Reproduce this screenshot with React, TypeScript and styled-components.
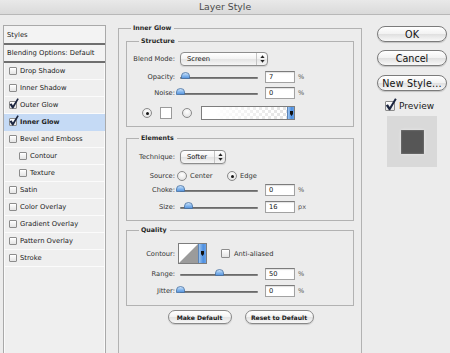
import React from "react";
import styled, { createGlobalStyle } from "styled-components";

const Global = createGlobalStyle`
  html, body { margin: 0; padding: 0; width: 450px; height: 353px; overflow: hidden; background: #ececec; }
  body { font-family: "DejaVu Sans", "Noto Sans", sans-serif; color: #2a2a2a; }
  *, *::before, *::after { box-sizing: border-box; }
`;

const Window = styled.div`
  width: 450px;
  height: 353px;
  display: flex;
  flex-direction: column;
  background: #ececec;
  overflow: hidden;
`;

const TitleBar = styled.div`
  height: 15px;
  flex: none;
  background: linear-gradient(#e9e9e9, #dadada);
  border-bottom: 1px solid #b8b8b8;
  display: flex;
  align-items: center;
  justify-content: center;
  font-size: 9.3px;
  line-height: 1;
  color: #4b4b4b;
`;

const Body = styled.div`
  display: flex;
  align-items: flex-start;
  padding: 8px 0 0 3px;
`;

/* ---------- left list ---------- */

const StyleList = styled.div`
  width: 103px;
  height: 340px;
  margin-top: 2px;
  flex: none;
  border: 1px solid #a9a9a9;
  border-bottom: none;
  background: #efefef;
  box-shadow: inset 1px 0 0 #fafafa, inset -1px 0 0 #fafafa;
  font-size: 6.8px;
  color: #222;
`;

const ListHead = styled.div<{ h: number }>`
  height: ${(p) => p.h}px;
  display: flex;
  align-items: center;
  padding-left: 3px;
  background: #f3f3f3;
  border-bottom: 2px solid #6f6f6f;
`;

const ListRow = styled.div<{ indent?: boolean; selected?: boolean }>`
  height: 17px;
  display: flex;
  align-items: center;
  gap: 3px;
  padding-left: ${(p) => (p.indent ? 15 : 5)}px;
  background: ${(p) => (p.selected ? "#c5daf5" : "transparent")};
  border-bottom: 1px solid ${(p) => (p.selected ? "#c5daf5" : "#fbfbfb")};
  font-weight: ${(p) => (p.selected ? "bold" : "normal")};
  font-size: ${(p) => (p.selected ? 6.5 : 6.8)}px;
`;

const BoxWrap = styled.span<{ s: number }>`
  position: relative;
  flex: none;
  width: ${(p) => p.s}px;
  height: ${(p) => p.s}px;
  border: 1px solid #8c8c8c;
  border-radius: 1px;
  background: linear-gradient(#ffffff, #e4e4e4);
  box-shadow: inset 0 1px 0 #fff;
`;

const CheckMark = styled.svg`
  position: absolute;
  left: -1px;
  bottom: -1px;
`;

const CheckBox = ({ checked, s = 8 }: { checked?: boolean; s?: number }) => (
  <BoxWrap s={s}>
    {checked && (
      <CheckMark width={s + 2} height={s + 3} viewBox="0 0 10 11">
        <path
          d="M0.6 6.4 L2.4 5.2 L3.9 7.6 L8.4 0.2 L9.8 1.1 L4.3 10.4 L3.3 10.4 Z"
          fill="#1c2640"
        />
      </CheckMark>
    )}
  </BoxWrap>
);

/* ---------- main panel ---------- */

const OuterSet = styled.fieldset`
  margin: 0 0 0 12px;
  padding: 0 7px;
  width: 244px;
  height: 345px;
  flex: none;
  border: 1px solid #b2b2b2;
  min-inline-size: auto;
`;

const Legend = styled.legend<{ ml: number }>`
  height: 10px;
  line-height: 10px;
  padding: 0 3px 0 2px;
  margin-left: ${(p) => p.ml}px;
  font-weight: bold;
  font-size: 6.3px;
  color: #262626;
`;

const Group = styled.fieldset<{ mt: number; pb: number }>`
  margin: ${(p) => p.mt}px 0 0 0;
  padding: 0 0 ${(p) => p.pb}px 0;
  border: 1px solid #b2b2b2;
  min-inline-size: auto;
`;

const Row = styled.div<{ h: number; mt: number }>`
  height: ${(p) => p.h}px;
  margin-top: ${(p) => p.mt}px;
  display: grid;
  grid-template-columns: 48px auto;
  column-gap: 5px;
  align-items: center;
`;

const Label = styled.span`
  font-size: 6.7px;
  color: #333;
  text-align: right;
  white-space: nowrap;
`;

const Controls = styled.div<{ shift?: number }>`
  display: flex;
  align-items: center;
  margin-left: ${(p) => p.shift || 0}px;
`;

const Popup = styled.div<{ w: number }>`
  width: ${(p) => p.w}px;
  height: 14px;
  border: 1px solid #8d8d8d;
  border-radius: 4px;
  background: linear-gradient(#ffffff, #f3f3f3 48%, #e4e4e4 52%, #f6f6f6);
  box-shadow: 0 1px 1px rgba(0, 0, 0, 0.12);
  display: flex;
  align-items: center;
  font-size: 6.7px;
  color: #111;
`;

const PopupText = styled.span`
  flex: 1;
  padding-left: 6px;
`;

const PopupArrows = styled.span`
  width: 11px;
  height: 100%;
  border-left: 1px solid #c4c4c4;
  display: flex;
  align-items: center;
  justify-content: center;
`;

const Arrows = () => (
  <svg width="5" height="8" viewBox="0 0 5 8">
    <path d="M2.5 0.3 L4.6 3 L0.4 3 Z" fill="#222" />
    <path d="M2.5 7.7 L4.6 5 L0.4 5 Z" fill="#222" />
  </svg>
);

const Track = styled.div`
  position: relative;
  width: 78px;
  height: 12px;
  margin-right: 7px;
  flex: none;
  &::before {
    content: "";
    position: absolute;
    left: 0;
    right: 0;
    top: 5.5px;
    height: 2px;
    border-radius: 1px;
    background: linear-gradient(#5f5f5f, #8c8c8c);
  }
`;

const ThumbSvg = styled.svg`
  position: absolute;
  top: 0.5px;
  margin-left: -4.5px;
`;

const Slider = ({ pct }: { pct: number }) => (
  <Track>
    <ThumbSvg width="9" height="7" viewBox="0 0 9 7" style={{ left: `${pct}%` }}>
      <defs>
        <linearGradient id="tg" x1="0" y1="0" x2="0" y2="1">
          <stop offset="0" stopColor="#d6e8fb" />
          <stop offset="0.5" stopColor="#8dbcef" />
          <stop offset="1" stopColor="#4f8fdc" />
        </linearGradient>
      </defs>
      <path
        d="M0.5 6.5 L0.5 4 Q0.5 0.5 4.5 0.5 Q8.5 0.5 8.5 4 L8.5 6.5 Z"
        fill="url(#tg)"
        stroke="#47709f"
        strokeWidth="0.8"
      />
    </ThumbSvg>
  </Track>
);

const NumField = styled.div`
  width: 30px;
  height: 12px;
  flex: none;
  background: #fff;
  border: 1px solid #a2a2a2;
  border-top-color: #7c7c7c;
  box-shadow: inset 0 1px 1px rgba(0, 0, 0, 0.12);
  display: flex;
  align-items: center;
  padding-left: 3px;
  font-size: 6.7px;
  color: #111;
`;

const Unit = styled.span`
  margin-left: 3px;
  font-size: 6.5px;
  color: #555;
`;

const SliderRow = ({
  label,
  pct,
  value,
  unit,
  mt,
}: {
  label: string;
  pct: number;
  value: string;
  unit: string;
  mt: number;
}) => (
  <Row h={12} mt={mt}>
    <Label>{label}</Label>
    <Controls>
      <Slider pct={pct} />
      <NumField>{value}</NumField>
      <Unit>{unit}</Unit>
    </Controls>
  </Row>
);

const Radio = styled.span<{ on?: boolean }>`
  width: 10px;
  height: 10px;
  flex: none;
  border-radius: 50%;
  border: 1px solid #8a8a8a;
  background: radial-gradient(circle at 50% 35%, #ffffff, #e6e6e6 70%, #d6d6d6);
  display: flex;
  align-items: center;
  justify-content: center;
  &::after {
    content: "";
    width: 3px;
    height: 3px;
    border-radius: 50%;
    background: #161616;
    display: ${(p) => (p.on ? "block" : "none")};
  }
`;

const ColorRow = styled.div`
  height: 14px;
  margin-top: 7px;
  display: flex;
  align-items: center;
  padding-left: 15px;
`;

const Swatch = styled.span`
  width: 12px;
  height: 12px;
  margin: 0 10px 0 8px;
  background: #fff;
  border: 1px solid #9a9a9a;
`;

const GradientBox = styled.div`
  width: 94px;
  height: 14px;
  margin-left: 9px;
  border: 1px solid #7d7d7d;
  display: flex;
`;

const GradientFill = styled.div`
  flex: 1;
  background: linear-gradient(to right, #ffffff 15%, rgba(255, 255, 255, 0)),
    repeating-conic-gradient(#e2e2e2 0 25%, #ffffff 0 50%) 0 0 / 6px 6px;
`;

const AquaArrow = styled.div<{ w: number }>`
  width: ${(p) => p.w}px;
  flex: none;
  background: linear-gradient(to right, #9cc4f0, #4d8fe0 60%, #6aa3ea);
  border-left: 1px solid #5a84b8;
  display: flex;
  align-items: center;
  justify-content: center;
`;

const DownGlyph = () => (
  <svg width="3" height="5" viewBox="0 0 3 5">
    <path d="M0 0 H3 V3 L1.5 5 L0 3 Z" fill="#111" />
  </svg>
);

const RadioOpt = styled.span<{ w?: number }>`
  display: inline-flex;
  align-items: center;
  gap: 3px;
  width: ${(p) => (p.w ? `${p.w}px` : "auto")};
  font-size: 6.7px;
  color: #333;
`;

const ContourBox = styled.div`
  width: 29px;
  height: 21px;
  margin-left: -2px;
  border: 1px solid #7d7d7d;
  display: flex;
  background: #fff;
`;

const ContourPreview = styled.svg`
  flex: 1;
`;

const CheckLabel = styled.span`
  display: inline-flex;
  align-items: center;
  gap: 4px;
  margin-left: 14px;
  font-size: 6.7px;
  color: #333;
`;

const ButtonRow = styled.div`
  display: flex;
  justify-content: center;
  gap: 13px;
  margin-top: 4px;
  padding-left: 1px;
`;

const SmallButton = styled.div<{ w: number }>`
  width: ${(p) => p.w}px;
  height: 14px;
  border: 1px solid #888;
  border-radius: 7px;
  background: linear-gradient(#ffffff, #f3f3f3 48%, #e3e3e3 52%, #f7f7f7);
  box-shadow: 0 1px 1px rgba(0, 0, 0, 0.15);
  display: flex;
  align-items: center;
  justify-content: center;
  font-size: 6.1px;
  font-weight: bold;
  color: #1a1a1a;
`;

/* ---------- right column ---------- */

const Side = styled.div`
  width: 70px;
  margin: 3px 0 0 15px;
  flex: none;
  display: flex;
  flex-direction: column;
`;

const AquaButton = styled.div<{ mt: number; ls?: number }>`
  height: 16px;
  margin-top: ${(p) => p.mt}px;
  border: 1px solid #7b7b7b;
  border-radius: 8px;
  background: linear-gradient(#ffffff, #f2f2f2 48%, #e0e0e0 52%, #f8f8f8);
  box-shadow: 0 1px 1px rgba(0, 0, 0, 0.18);
  display: flex;
  align-items: center;
  justify-content: center;
  font-size: 9.6px;
  letter-spacing: ${(p) => p.ls || 0}px;
  color: #111;
  white-space: nowrap;
`;

const PreviewRow = styled.div`
  height: 12px;
  margin: 9px 0 0 8px;
  display: flex;
  align-items: center;
  gap: 4px;
  font-size: 9px;
  color: #1a1a1a;
`;

const PreviewSwatch = styled.div`
  width: 50px;
  height: 51px;
  margin: 4px 0 0 10px;
  background: #d9d9d9;
  display: flex;
  align-items: center;
  justify-content: center;
`;

const PreviewSquare = styled.div`
  width: 23px;
  height: 24px;
  background: #565656;
  box-shadow: inset 0 0 2px rgba(255, 255, 255, 0.35), 0 0 3px rgba(255, 255, 255, 0.5);
`;

const styleRows = [
  { label: "Drop Shadow" },
  { label: "Inner Shadow" },
  { label: "Outer Glow", checked: true },
  { label: "Inner Glow", checked: true, selected: true },
  { label: "Bevel and Emboss" },
  { label: "Contour", indent: true },
  { label: "Texture", indent: true },
  { label: "Satin" },
  { label: "Color Overlay" },
  { label: "Gradient Overlay" },
  { label: "Pattern Overlay" },
  { label: "Stroke" },
];

export default function App() {
  return (
    <>
      <Global />
      <Window>
        <TitleBar>Layer Style</TitleBar>
        <Body>
          <StyleList>
            <ListHead h={19}>Styles</ListHead>
            <ListHead h={18}>Blending Options: Default</ListHead>
            {styleRows.map((r) => (
              <ListRow key={r.label} indent={r.indent} selected={r.selected}>
                <CheckBox checked={r.checked} />
                <span>{r.label}</span>
              </ListRow>
            ))}
          </StyleList>

          <OuterSet>
            <Legend ml={5}>Inner Glow</Legend>

            <Group mt={3} pb={6}>
              <Legend ml={12}>Structure</Legend>
              <Row h={14} mt={6}>
                <Label>Blend Mode:</Label>
                <Controls>
                  <Popup w={88}>
                    <PopupText>Screen</PopupText>
                    <PopupArrows>
                      <Arrows />
                    </PopupArrows>
                  </Popup>
                </Controls>
              </Row>
              <SliderRow label="Opacity:" pct={7} value="7" unit="%" mt={5} />
              <SliderRow label="Noise:" pct={0} value="0" unit="%" mt={4} />
              <ColorRow>
                <Radio on />
                <Swatch />
                <Radio />
                <GradientBox>
                  <GradientFill />
                  <AquaArrow w={7}>
                    <DownGlyph />
                  </AquaArrow>
                </GradientBox>
              </ColorRow>
            </Group>

            <Group mt={6} pb={7}>
              <Legend ml={12}>Elements</Legend>
              <Row h={14} mt={7}>
                <Label>Technique:</Label>
                <Controls>
                  <Popup w={46}>
                    <PopupText>Softer</PopupText>
                    <PopupArrows>
                      <Arrows />
                    </PopupArrows>
                  </Popup>
                </Controls>
              </Row>
              <Row h={12} mt={6}>
                <Label>Source:</Label>
                <Controls shift={-3}>
                  <RadioOpt w={50}>
                    <Radio />
                    Center
                  </RadioOpt>
                  <RadioOpt>
                    <Radio on />
                    Edge
                  </RadioOpt>
                </Controls>
              </Row>
              <SliderRow label="Choke:" pct={0} value="0" unit="%" mt={2} />
              <SliderRow label="Size:" pct={11.5} value="16" unit="px" mt={5} />
            </Group>

            <Group mt={4} pb={8}>
              <Legend ml={12}>Quality</Legend>
              <Row h={21} mt={8}>
                <Label>Contour:</Label>
                <Controls>
                  <ContourBox>
                    <ContourPreview viewBox="0 0 20 19" preserveAspectRatio="none">
                      <rect x="0" y="0" width="20" height="19" fill="#ffffff" />
                      <polygon points="0,19 20,0 20,19" fill="#9b9b9b" />
                    </ContourPreview>
                    <AquaArrow w={8}>
                      <DownGlyph />
                    </AquaArrow>
                  </ContourBox>
                  <CheckLabel>
                    <CheckBox s={9} />
                    Anti-aliased
                  </CheckLabel>
                </Controls>
              </Row>
              <SliderRow label="Range:" pct={50} value="50" unit="%" mt={4} />
              <SliderRow label="Jitter:" pct={0} value="0" unit="%" mt={5} />
            </Group>

            <ButtonRow>
              <SmallButton w={64}>Make Default</SmallButton>
              <SmallButton w={69}>Reset to Default</SmallButton>
            </ButtonRow>
          </OuterSet>

          <Side>
            <AquaButton mt={0}>OK</AquaButton>
            <AquaButton mt={8}>Cancel</AquaButton>
            <AquaButton mt={9} ls={0.2}>
              New Style...
            </AquaButton>
            <PreviewRow>
              <CheckBox checked s={10} />
              Preview
            </PreviewRow>
            <PreviewSwatch>
              <PreviewSquare />
            </PreviewSwatch>
          </Side>
        </Body>
      </Window>
    </>
  );
}
